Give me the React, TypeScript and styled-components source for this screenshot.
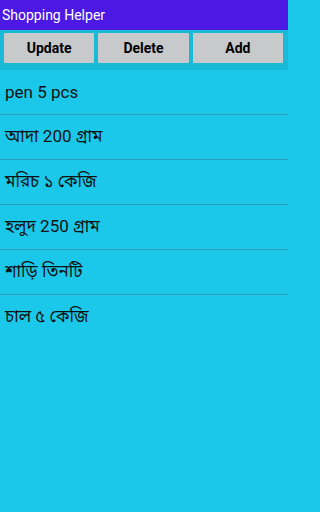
import React from 'react';
import styled, { createGlobalStyle } from 'styled-components';

const GlobalStyle = createGlobalStyle`
  html, body {
    margin: 0;
    padding: 0;
    background-color: #1bc8ea;
  }
  body {
    font-family: Roboto, "Noto Sans", "Noto Sans Bengali", "Lohit Bengali", sans-serif;
  }
`;

const Screen = styled.div`
  width: 288px;
  min-height: 512px;
  background-color: #1bc8ea;
  display: flex;
  flex-direction: column;
`;

const TitleBar = styled.div`
  height: 30px;
  background-color: #4b18e4;
  color: white;
  font-size: 14px;
  display: flex;
  align-items: center;
  padding-left: 2px;
`;

const Toolbar = styled.div`
  height: 40px;
  background-color: #19b9d8;
  display: flex;
  gap: 4px;
  padding: 3px 5px 0 4px;
  box-sizing: border-box;
`;

const ActionButton = styled.button`
  flex: 1;
  height: 30px;
  border: none;
  border-radius: 1px;
  background-color: #c8c9cb;
  color: #000;
  font-family: Roboto, sans-serif;
  font-weight: bold;
  font-size: 14px;
  padding: 0;
`;

const ItemList = styled.ul`
  list-style: none;
  margin: 0;
  padding: 0;
`;

const Item = styled.li<{ $last?: boolean }>`
  height: 45px;
  box-sizing: border-box;
  border-bottom: ${({ $last }) => ($last ? 'none' : '1px solid #2f9db6')};
  display: flex;
  align-items: center;
  padding-left: 5px;
  font-size: 17px;
  color: #111;
`;

const items = [
  'pen 5 pcs',
  'আদা 200 গ্রাম',
  'মরিচ ১ কেজি',
  'হলুদ 250 গ্রাম',
  'শাড়ি তিনটি',
  'চাল ৫ কেজি',
];

const App: React.FC = () => {
  return (
    <>
      <GlobalStyle />
      <Screen>
        <TitleBar>Shopping Helper</TitleBar>
        <Toolbar>
          <ActionButton>Update</ActionButton>
          <ActionButton>Delete</ActionButton>
          <ActionButton>Add</ActionButton>
        </Toolbar>
        <ItemList>
          {items.map((item, i) => (
            <Item key={item} $last={i === items.length - 1}>
              {item}
            </Item>
          ))}
        </ItemList>
      </Screen>
    </>
  );
};

export default App;
